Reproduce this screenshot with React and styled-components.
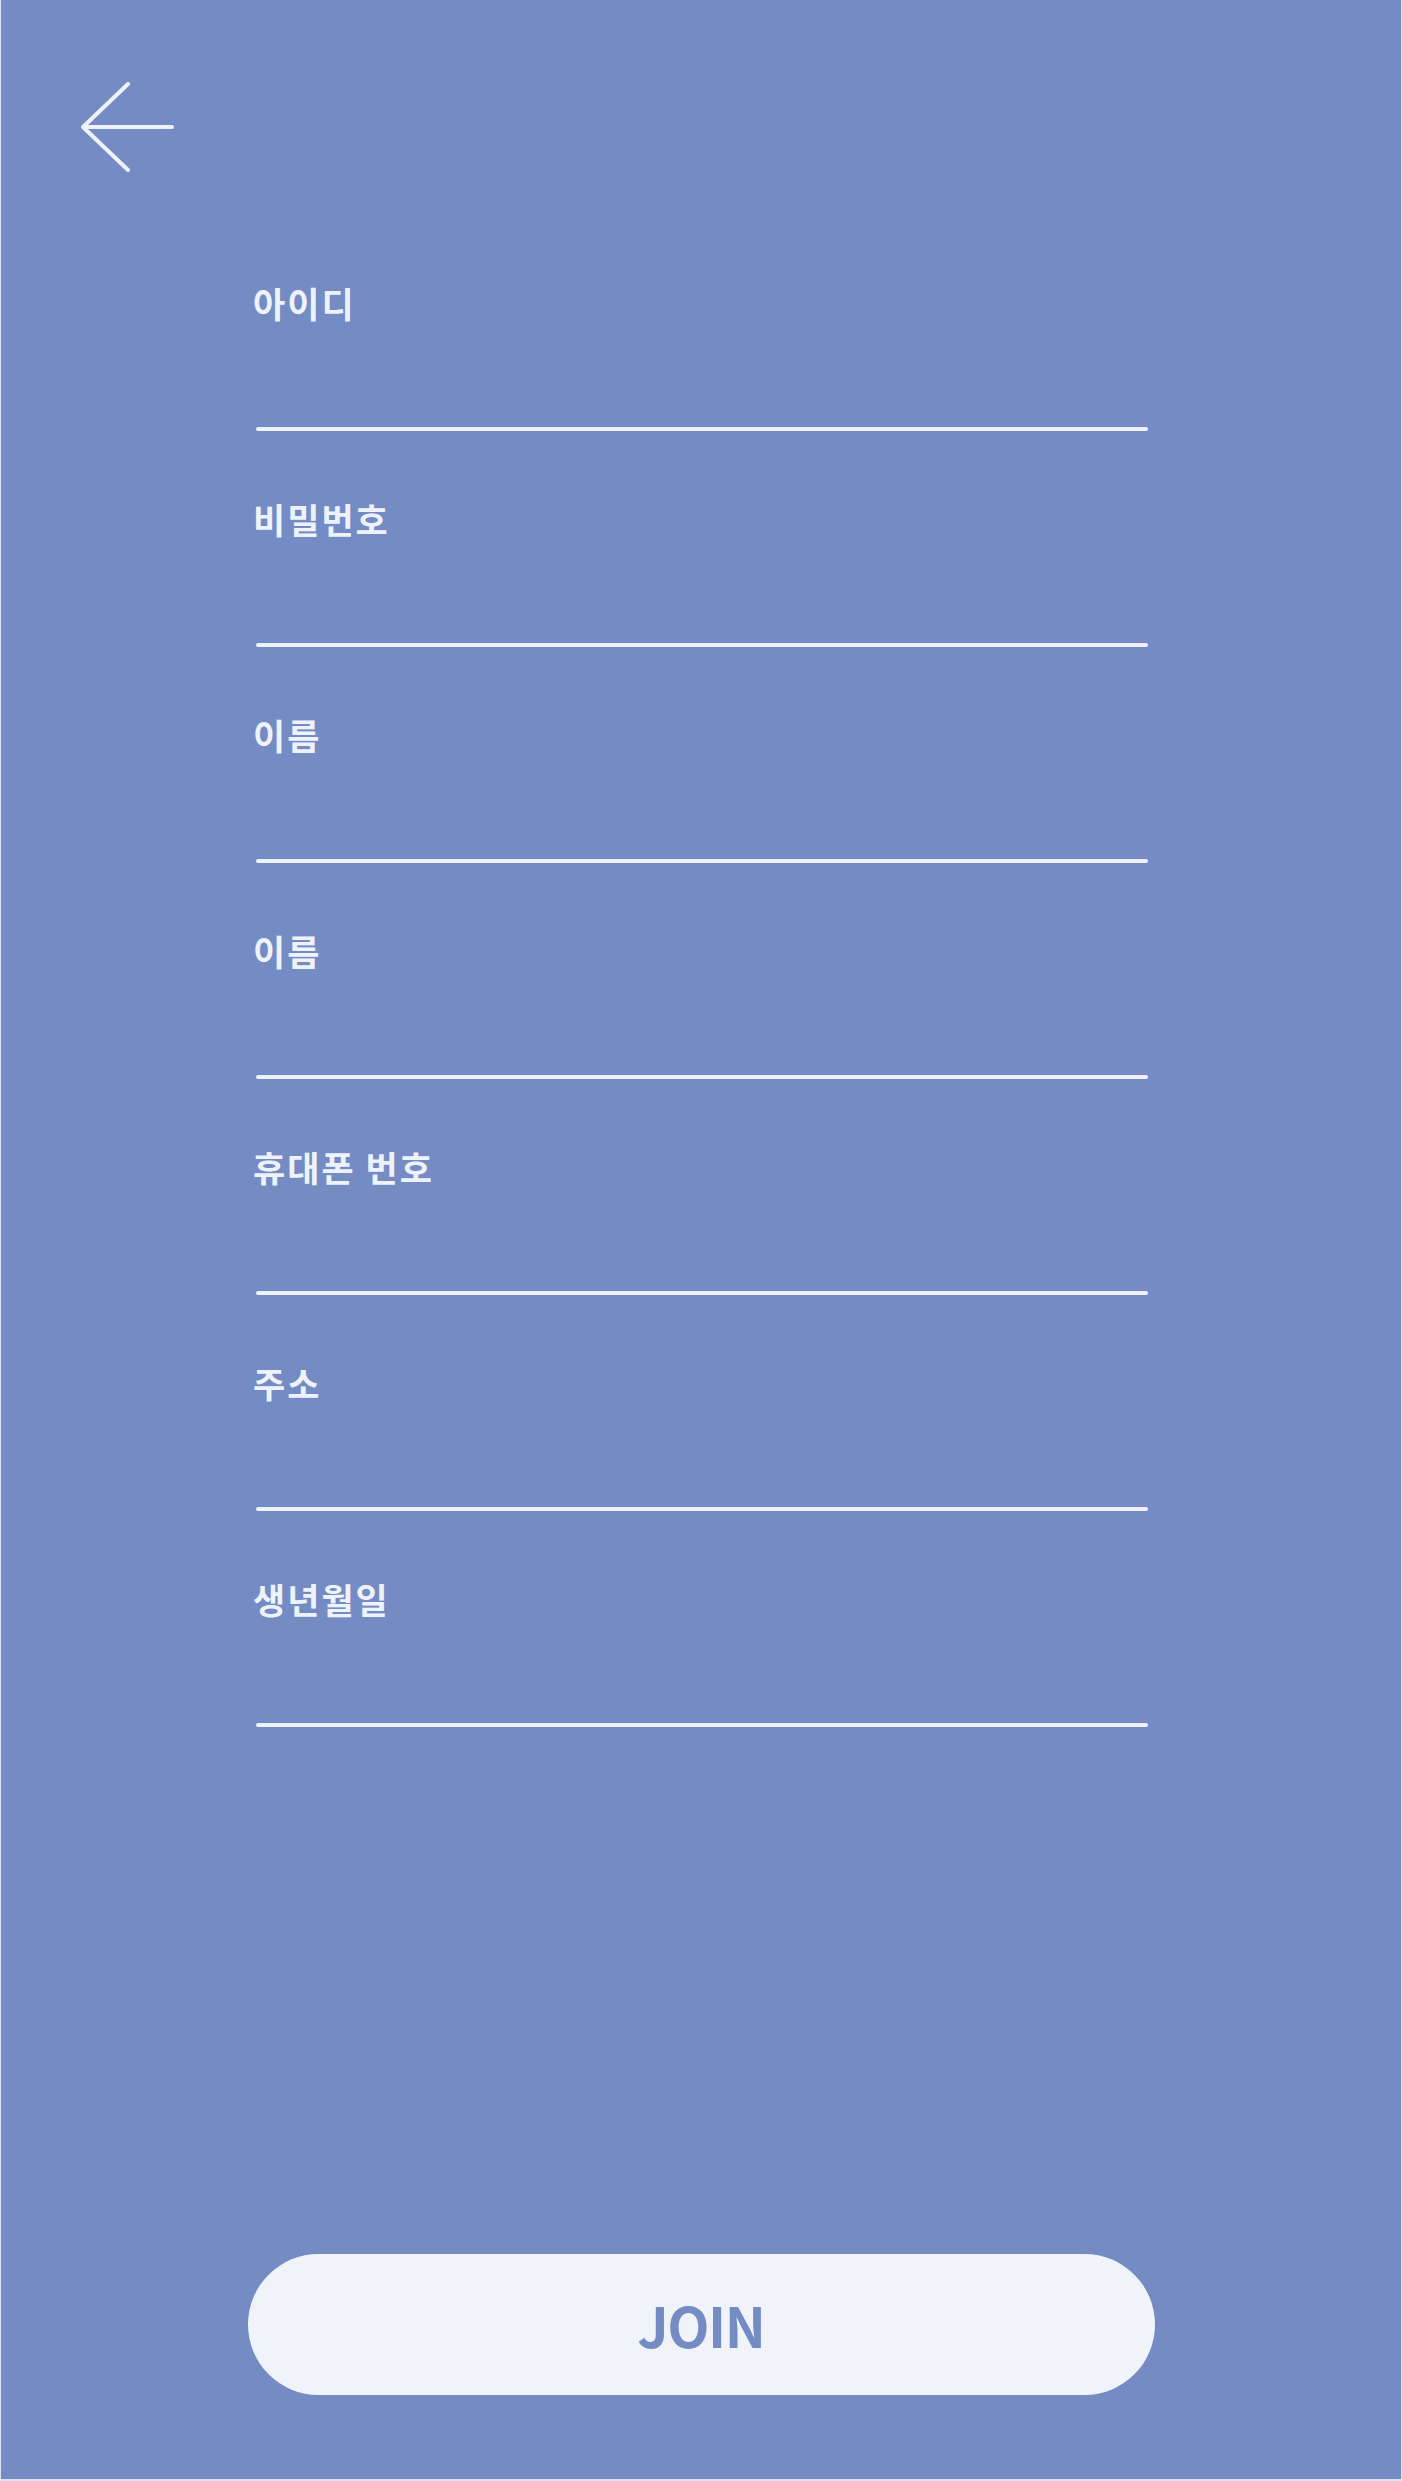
import React from "react";
import styled, { createGlobalStyle } from "styled-components";

const Global = createGlobalStyle`
  html, body {
    margin: 0;
    padding: 0;
    background: #dde3f1;
  }
  body {
    font-family: "Noto Sans CJK KR", "Noto Sans", sans-serif;
  }
  * { box-sizing: border-box; }
`;

const Page = styled.div`
  margin-left: 1px;
  width: 1400px;
  min-height: 2479px;
  background: #748bc4;
  display: flex;
  flex-direction: column;
`;

const Header = styled.header`
  padding: 82px 0 0 80px;
  height: 172px;
`;

const BackButton = styled.button`
  background: none;
  border: 0;
  padding: 0;
  display: block;
  cursor: pointer;
  line-height: 0;
`;

const Form = styled.form`
  margin-top: 113px;
  padding-left: 252px;
  display: flex;
  flex-direction: column;
  gap: 70px;
`;

const Field = styled.div`
  display: flex;
  flex-direction: column;
`;

const Label = styled.label`
  font-family: "Noto Sans CJK KR", sans-serif;
  font-size: 35px;
  line-height: 35px;
  font-weight: 700;
  letter-spacing: 2px;
  color: #eef2fa;
`;

const Input = styled.input`
  height: 107px;
  width: 892px;
  margin-left: 3px;
  background: transparent;
  border: 0;
  outline: none;
  color: #eef2fa;
  font-family: "Noto Sans CJK KR", sans-serif;
  font-size: 30px;
`;

const Underline = styled.div`
  width: 892px;
  height: 4px;
  margin-left: 3px;
  border-radius: 2px;
  background: #eef2fa;
`;

const JoinButton = styled.button`
  margin: auto auto 84px;
  width: 907px;
  height: 141px;
  border-radius: 71px;
  border: 0;
  background: #f0f3fa;
  color: #748bc4;
  font-family: "Noto Sans CJK KR", sans-serif;
  font-size: 55px;
  font-weight: 700;
  letter-spacing: -1.5px;
  line-height: 1;
  display: flex;
  align-items: center;
  justify-content: center;
  cursor: pointer;
`;

const fields = [
  { id: "userId", label: "아이디", type: "text" },
  { id: "password", label: "비밀번호", type: "password" },
  { id: "name", label: "이름", type: "text" },
  { id: "name2", label: "이름", type: "text" },
  { id: "phone", label: "휴대폰 번호", type: "tel" },
  { id: "address", label: "주소", type: "text" },
  { id: "birth", label: "생년월일", type: "text" },
];

export default function App() {
  return (
    <>
      <Global />
      <Page>
        <Header>
          <BackButton aria-label="뒤로가기">
            <svg width="93" height="90" viewBox="0 0 93 90" fill="none">
              <path
                d="M47 2 L2 45 L47 88 M2 45 H91"
                stroke="#eef2fa"
                strokeWidth="4"
                strokeLinecap="round"
                strokeLinejoin="round"
              />
            </svg>
          </BackButton>
        </Header>
        <Form onSubmit={(e) => e.preventDefault()}>
          {fields.map((f) => (
            <Field key={f.id}>
              <Label htmlFor={f.id}>{f.label}</Label>
              <Input id={f.id} type={f.type} />
              <Underline />
            </Field>
          ))}
        </Form>
        <JoinButton type="button">JOIN</JoinButton>
      </Page>
    </>
  );
}
